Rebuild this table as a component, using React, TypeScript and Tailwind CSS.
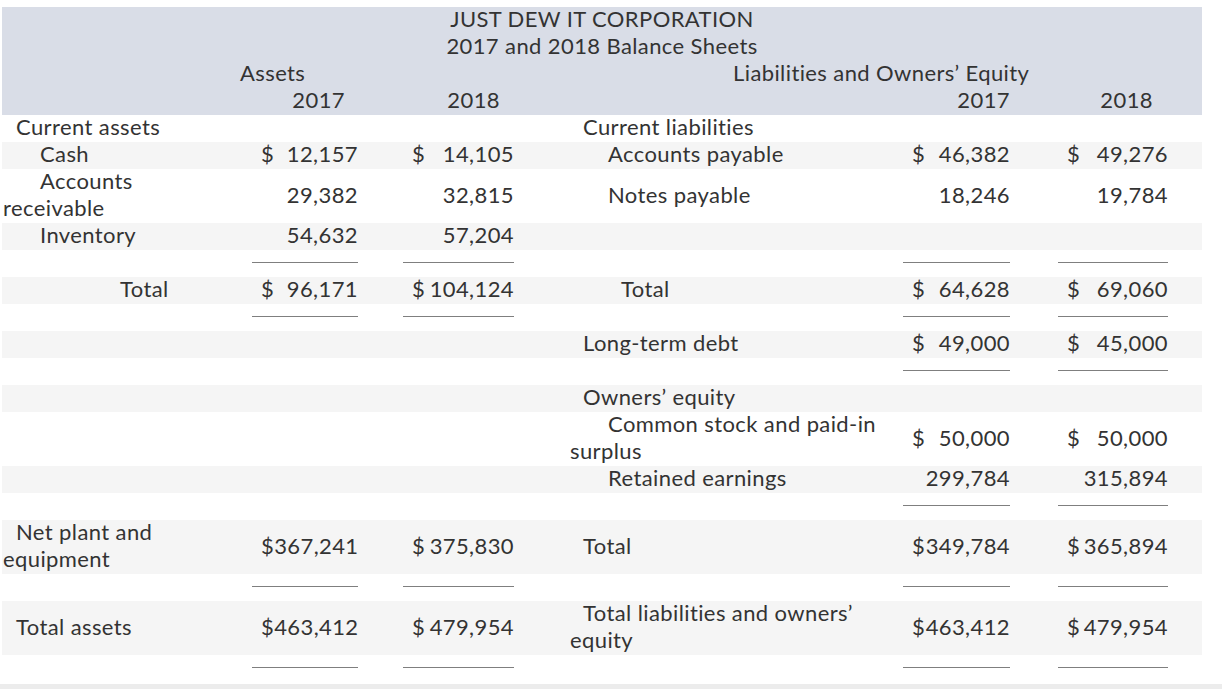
import React from "react";

type Cell = { cur?: boolean; v: string } | null;

interface Row {
  kind: "data";
  shade: boolean;
  tall?: boolean;
  left: React.ReactNode;
  leftIndent: string;
  a17: Cell;
  a18: Cell;
  right: React.ReactNode;
  rightIndent: string;
  l17: Cell;
  l18: Cell;
}

interface Rule {
  kind: "rule";
  assets: boolean;
  liab: boolean;
}

const GRID = "grid grid-cols-[250px_151px_166px_334px_155px_144px]";

const rows: (Row | Rule)[] = [
  { kind: "data", shade: false, left: "Current assets", leftIndent: "indent-[13px]", a17: null, a18: null, right: "Current liabilities", rightIndent: "indent-[13px]", l17: null, l18: null },
  { kind: "data", shade: true, left: "Cash", leftIndent: "indent-[37px]", a17: { cur: true, v: "12,157" }, a18: { cur: true, v: "14,105" }, right: "Accounts payable", rightIndent: "indent-[38px]", l17: { cur: true, v: "46,382" }, l18: { cur: true, v: "49,276" } },
  { kind: "data", shade: false, tall: true, left: <>Accounts<br />receivable</>, leftIndent: "indent-[37px]", a17: { v: "29,382" }, a18: { v: "32,815" }, right: "Notes payable", rightIndent: "indent-[38px]", l17: { v: "18,246" }, l18: { v: "19,784" } },
  { kind: "data", shade: true, left: "Inventory", leftIndent: "indent-[37px]", a17: { v: "54,632" }, a18: { v: "57,204" }, right: "", rightIndent: "", l17: null, l18: null },
  { kind: "rule", assets: true, liab: true },
  { kind: "data", shade: true, left: "Total", leftIndent: "indent-[117px]", a17: { cur: true, v: "96,171" }, a18: { cur: true, v: "104,124" }, right: "Total", rightIndent: "indent-[51px]", l17: { cur: true, v: "64,628" }, l18: { cur: true, v: "69,060" } },
  { kind: "rule", assets: true, liab: true },
  { kind: "data", shade: true, left: "", leftIndent: "", a17: null, a18: null, right: "Long-term debt", rightIndent: "indent-[13px]", l17: { cur: true, v: "49,000" }, l18: { cur: true, v: "45,000" } },
  { kind: "rule", assets: false, liab: true },
  { kind: "data", shade: true, left: "", leftIndent: "", a17: null, a18: null, right: "Owners’ equity", rightIndent: "indent-[13px]", l17: null, l18: null },
  { kind: "data", shade: false, tall: true, left: "", leftIndent: "", a17: null, a18: null, right: <>Common stock and paid-in<br />surplus</>, rightIndent: "indent-[38px]", l17: { cur: true, v: "50,000" }, l18: { cur: true, v: "50,000" } },
  { kind: "data", shade: true, left: "", leftIndent: "", a17: null, a18: null, right: "Retained earnings", rightIndent: "indent-[38px]", l17: { v: "299,784" }, l18: { v: "315,894" } },
  { kind: "rule", assets: false, liab: true },
  { kind: "data", shade: true, tall: true, left: <>Net plant and<br />equipment</>, leftIndent: "indent-[13px]", a17: { cur: true, v: "367,241" }, a18: { cur: true, v: "375,830" }, right: "Total", rightIndent: "indent-[13px]", l17: { cur: true, v: "349,784" }, l18: { cur: true, v: "365,894" } },
  { kind: "rule", assets: true, liab: true },
  { kind: "data", shade: true, tall: true, left: "Total assets", leftIndent: "indent-[13px]", a17: { cur: true, v: "463,412" }, a18: { cur: true, v: "479,954" }, right: <>Total liabilities and owners’<br />equity</>, rightIndent: "indent-[13px]", l17: { cur: true, v: "463,412" }, l18: { cur: true, v: "479,954" } },
  { kind: "rule", assets: true, liab: true },
];

function Amount({ cell, width }: { cell: Cell; width: string }) {
  if (!cell) return <div />;
  return (
    <div className={`${width} flex justify-between pl-[9px]`}>
      <span>{cell.cur ? "$" : ""}</span>
      <span>{cell.v}</span>
    </div>
  );
}

function RuleLine({ show, width }: { show: boolean; width: string }) {
  return <div>{show && <div className={`${width} mt-[12px] border-t border-[#7f7f7f]`} />}</div>;
}

export default function App() {
  return (
    <div className="w-[1222px] h-[689px] bg-white text-[#333333] font-['Lato','Liberation_Sans',sans-serif] text-[22px] tracking-[0.4px] leading-[27px] flex flex-col">
      <div className="ml-[2px] mt-[7px] w-[1200px]">
        {/* header */}
        <div className="bg-[#d9dde7] leading-[23px]">
          <div className="text-center h-[27px]">JUST DEW IT CORPORATION</div>
          <div className="text-center h-[27px]">2017 and 2018 Balance Sheets</div>
          <div className="grid grid-cols-[238px_493px_1fr] h-[27px]">
            <div />
            <div>Assets</div>
            <div>Liabilities and Owners’ Equity</div>
          </div>
          <div className={`${GRID} h-[27px]`}>
            <div />
            <div className="w-[106px] text-right pr-[13px]">2017</div>
            <div className="w-[111px] text-right pr-[14px]">2018</div>
            <div />
            <div className="w-[107px] text-right">2017</div>
            <div className="w-[110px] text-right pr-[15px]">2018</div>
          </div>
        </div>

        {rows.map((r, i) =>
          r.kind === "rule" ? (
            <div key={i} className={`${GRID} h-[27px]`}>
              <div />
              <RuleLine show={r.assets} width="w-[106px]" />
              <RuleLine show={r.assets} width="w-[111px]" />
              <div />
              <RuleLine show={r.liab} width="w-[107px]" />
              <RuleLine show={r.liab} width="w-[110px]" />
            </div>
          ) : (
            <div
              key={i}
              className={`${GRID} content-center items-center whitespace-nowrap pb-[4px] ${r.tall ? "h-[54px]" : "h-[27px]"} ${r.shade ? "bg-[#f5f5f5]" : ""}`}
            >
              <div className={`pl-[1px] ${r.leftIndent}`}>{r.left}</div>
              <Amount cell={r.a17} width="w-[106px]" />
              <Amount cell={r.a18} width="w-[111px]" />
              <div className={`pl-[1px] ${r.rightIndent}`}>{r.right}</div>
              <Amount cell={r.l17} width="w-[107px]" />
              <Amount cell={r.l18} width="w-[110px]" />
            </div>
          )
        )}
      </div>
      <div className="mt-auto h-[5px] bg-[#ececec]" />
    </div>
  );
}
